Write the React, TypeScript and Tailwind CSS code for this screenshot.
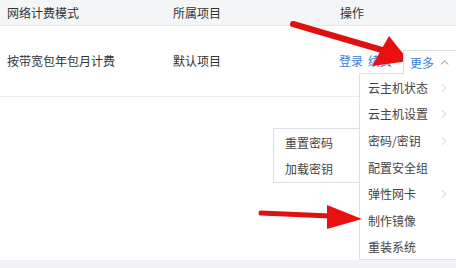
import { ChevronRight, ChevronUp } from "lucide-react"

const menuItems = [
  { label: "云主机状态", sub: true },
  { label: "云主机设置", sub: true },
  { label: "密码/密钥", sub: true },
  { label: "配置安全组", sub: false },
  { label: "弹性网卡", sub: true },
  { label: "制作镜像", sub: false },
  { label: "重装系统", sub: false },
]

function Arrows() {
  return (
    <svg
      className="absolute left-0 top-0 pointer-events-none"
      width="456"
      height="268"
      viewBox="0 0 456 268"
    >
      {/* top arrow */}
      <line x1="293" y1="24" x2="382" y2="50" stroke="#e01010" strokeWidth="6" strokeLinecap="round" />
      <polygon points="389,36 409,61 372,66" fill="#e81010" />
      {/* bottom arrow */}
      <line x1="261" y1="213" x2="330" y2="216" stroke="#e01010" strokeWidth="5" strokeLinecap="round" />
      <polygon points="327,205 362,219 327,229" fill="#e81010" />
    </svg>
  )
}

export default function App() {
  return (
    <div
      className="relative w-[456px] h-[268px] overflow-hidden bg-white text-[12px] text-[#333]"
      style={{ fontFamily: '"Noto Sans CJK SC", "Noto Sans", sans-serif' }}
    >
      <div className="flex flex-col h-full">
        <div className="grid grid-cols-[166px_166px_1fr] h-[26px] items-center bg-[#f4f5f7] border-b border-[#e4e6ea] pl-[7px]">
          <span>网络计费模式</span>
          <span>所属项目</span>
          <span className="pl-[1px]">操作</span>
        </div>
        <div className="grid grid-cols-[166px_166px_1fr] h-[71px] items-center border-b border-[#e8e9ec] pl-[7px]">
          <span>按带宽包年包月计费</span>
          <span>默认项目</span>
          <div className="relative flex items-center text-[#3a7fd8]">
            <span>登录</span>
            <span className="ml-[5px]">续费</span>
          </div>
        </div>
        <div className="flex-1" />
        <div className="h-[8px] bg-[#f0f2f5]" />
      </div>

      {/* 更多 button */}
      <div className="absolute left-[403px] top-[50px] w-[60px] h-[24px] flex items-center gap-[3px] pl-[6px] border border-b-0 border-[#dcdfe4] bg-white text-[#3a7fd8] z-10">
        <span>更多</span>
        <ChevronUp size={13} strokeWidth={1.5} className="text-[#666] ml-[1px]" />
      </div>

      {/* main dropdown */}
      <div className="absolute left-[359px] top-[73px] w-[110px] h-[187px] border border-[#dcdfe4] bg-white pt-[0.5px] text-[#444]">
        {menuItems.map((item) => (
          <div key={item.label} className="h-[26.6px] flex items-center pl-[8px]">
            <span className="w-[69px]">{item.label}</span>
            {item.sub && <ChevronRight size={14} strokeWidth={1} className="text-[#aaa]" />}
          </div>
        ))}
      </div>

      {/* secondary submenu */}
      <div className="absolute left-[273px] top-[128px] w-[87px] h-[55px] border border-[#dcdfe4] bg-white text-[#444] pl-[11px] pt-[1px]">
        <div className="h-[26px] flex items-center">重置密码</div>
        <div className="h-[25px] flex items-center">加载密钥</div>
      </div>

      <Arrows />
    </div>
  )
}
